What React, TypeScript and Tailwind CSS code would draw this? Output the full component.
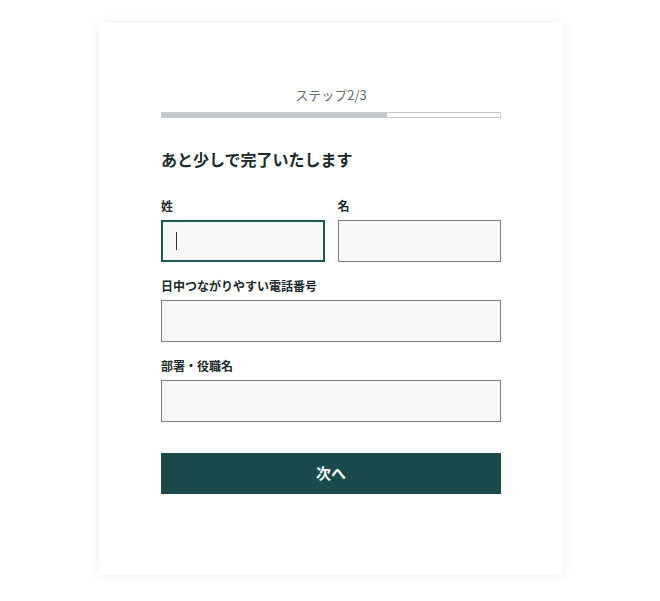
import React from 'react';

const font = { fontFamily: '"Noto Sans CJK JP", "Noto Sans", sans-serif' };

function Field({ label, focused = false }: { label: string; focused?: boolean }) {
  return (
    <div className="flex flex-col">
      <label className="text-[12px] leading-[12px] font-bold text-[#1c2a2a] mb-[8px]">{label}</label>
      <div
        className={
          focused
            ? 'h-[42px] bg-[#f6f8f7] border-2 border-[#1b5a52] flex items-center pl-[13px]'
            : 'h-[42px] bg-[#f6f8f7] border border-[#7c8187]'
        }
      >
        {focused && <span className="block w-px h-[18px] bg-[#333]" />}
      </div>
    </div>
  );
}

export default function App() {
  return (
    <div className="min-h-[601px] bg-white pt-[23px]" style={font}>
      <div className="w-[464px] ml-[99px] bg-white shadow-[0_0_12px_rgba(0,0,0,0.07)] px-[62px] pt-[63px] pb-[81px]">
        {/* Step indicator */}
        <p className="text-center text-[13px] leading-[18px] text-[#666b70]">ステップ2/3</p>
        <div className="mt-[8px] h-[6px] border border-[#c5c9cc] bg-white">
          <div className="h-full w-[66.7%] bg-[#c2c6c9]" />
        </div>

        <h2 className="mt-[32px] text-[16px] leading-[18px] font-bold text-[#1a2b2b]">
          あと少しで完了いたします
        </h2>

        <div className="mt-[32px] grid grid-cols-2 gap-[13px]">
          <Field label="姓" focused />
          <Field label="名" />
        </div>

        <div className="mt-[18px]">
          <Field label="日中つながりやすい電話番号" />
        </div>
        <div className="mt-[18px]">
          <Field label="部署・役職名" />
        </div>

        <button className="mt-[31px] w-full h-[41px] bg-[#194a4c] text-white text-[15px] font-bold">
          次へ
        </button>
      </div>
    </div>
  );
}
